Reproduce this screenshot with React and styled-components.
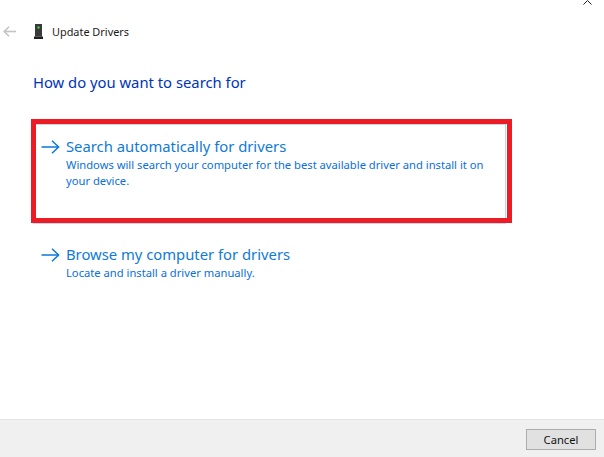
import React from "react";
import styled, { createGlobalStyle } from "styled-components";

const GlobalStyle = createGlobalStyle`
  html, body {
    margin: 0;
    padding: 0;
    background: #ffffff;
  }
  #root {
    height: 457px;
  }
`;

const Dialog = styled.div`
  position: relative;
  width: 604px;
  height: 457px;
  display: flex;
  flex-direction: column;
  overflow: hidden;
  font-family: "Noto Sans", "Open Sans", sans-serif;
  background: #ffffff;
`;

const CloseMark = styled.svg`
  position: absolute;
  top: 0;
  left: 583px;
`;

const Header = styled.div`
  display: flex;
  align-items: center;
  height: 20px;
  margin-top: 21px;
  padding-left: 3px;
`;

const BackIcon = styled.svg`
  display: block;
  margin-right: 18px;
`;

const DeviceIcon = styled.svg`
  display: block;
  margin-right: 9px;
`;

const HeaderTitle = styled.span`
  font-size: 10.9px;
  color: #1a1a1a;
`;

const Heading = styled.h1`
  margin: 31px 0 0 33px;
  font-size: 14.8px;
  line-height: 20px;
  font-weight: 400;
  color: #0033bc;
`;

const Options = styled.div`
  display: flex;
  flex-direction: column;
  gap: 8px;
  margin: 32px 0 0 33px;
  width: 473px;
`;

const Option = styled.div`
  position: relative;
  box-sizing: border-box;
  height: ${props => props.$height}px;
  display: flex;
  padding: 11px 0 0 7px;
  border: 1px solid ${props => (props.$selected ? "#bcd7ee" : "transparent")};
`;

const Highlight = styled.div`
  position: absolute;
  left: -3px;
  top: -6px;
  width: 481px;
  height: 104px;
  box-sizing: border-box;
  border: 5px solid #ed1c24;
  pointer-events: none;
`;

const Arrow = styled.svg`
  display: block;
  flex: none;
  margin: 4px 6px 0 0;
`;

const OptionText = styled.div`
  display: flex;
  flex-direction: column;
`;

const OptionTitle = styled.div`
  font-size: 14.8px;
  line-height: 20px;
  margin-bottom: 1px;
  color: #0f7ad8;
`;

const OptionDetail = styled.div`
  width: 425px;
  font-size: 11.2px;
  line-height: 16px;
  color: #0a6fdc;
`;

const Footer = styled.div`
  margin-top: auto;
  height: 38px;
  box-sizing: border-box;
  display: flex;
  align-items: flex-start;
  justify-content: flex-end;
  padding: 9px 8px 0 0;
  background: #f0f0f0;
  border-top: 1px solid #e3e3e3;
`;

const CancelButton = styled.button`
  width: 70px;
  height: 21px;
  box-sizing: border-box;
  padding: 0;
  border: 1px solid #adadad;
  background: #e1e1e1;
  color: #111111;
  font-family: inherit;
  font-size: 11.2px;
  line-height: 18px;
`;

const ArrowGlyph = () => (
  <Arrow width="19" height="14" viewBox="0 0 19 14" fill="none" stroke="#0a78d7" strokeWidth="1.5">
    <path d="M0.5 7H17.5" />
    <path d="M11 0.8L17.6 7L11 13.2" />
  </Arrow>
);

const options = [
  {
    title: "Search automatically for drivers",
    detail: "Windows will search your computer for the best available driver and install it on your device.",
    height: 100,
    selected: true,
  },
  {
    title: "Browse my computer for drivers",
    detail: "Locate and install a driver manually.",
    height: 60,
  },
];

const App = () => {
  return (
    <Dialog>
      <GlobalStyle />
      <CloseMark width="10" height="5" viewBox="0 0 10 5" fill="none" stroke="#222222" strokeWidth="1">
        <path d="M0.5 4.5L4.5 0.5L8.5 4.5" />
      </CloseMark>
      <Header>
        <BackIcon width="13" height="11" viewBox="0 0 13 11" fill="none" stroke="#c4c4c4" strokeWidth="1.6">
          <path d="M1 5.5H13" />
          <path d="M6 0.7L1.2 5.5L6 10.3" />
        </BackIcon>
        <DeviceIcon width="9" height="15" viewBox="0 0 9 15">
          <rect x="1" y="0" width="7" height="12.5" fill="#3a3a3a" />
          <rect x="3.5" y="2.5" width="2" height="2" fill="#3df03d" />
          <rect x="0" y="12.5" width="9" height="2.5" fill="#1d1d1d" />
        </DeviceIcon>
        <HeaderTitle>Update Drivers</HeaderTitle>
      </Header>
      <Heading>How do you want to search for</Heading>
      <Options>
        {options.map(option => (
          <Option key={option.title} $height={option.height} $selected={option.selected}>
            <ArrowGlyph />
            <OptionText>
              <OptionTitle>{option.title}</OptionTitle>
              <OptionDetail>{option.detail}</OptionDetail>
            </OptionText>
            {option.selected && <Highlight />}
          </Option>
        ))}
      </Options>
      <Footer>
        <CancelButton>Cancel</CancelButton>
      </Footer>
    </Dialog>
  );
};

export default App;
